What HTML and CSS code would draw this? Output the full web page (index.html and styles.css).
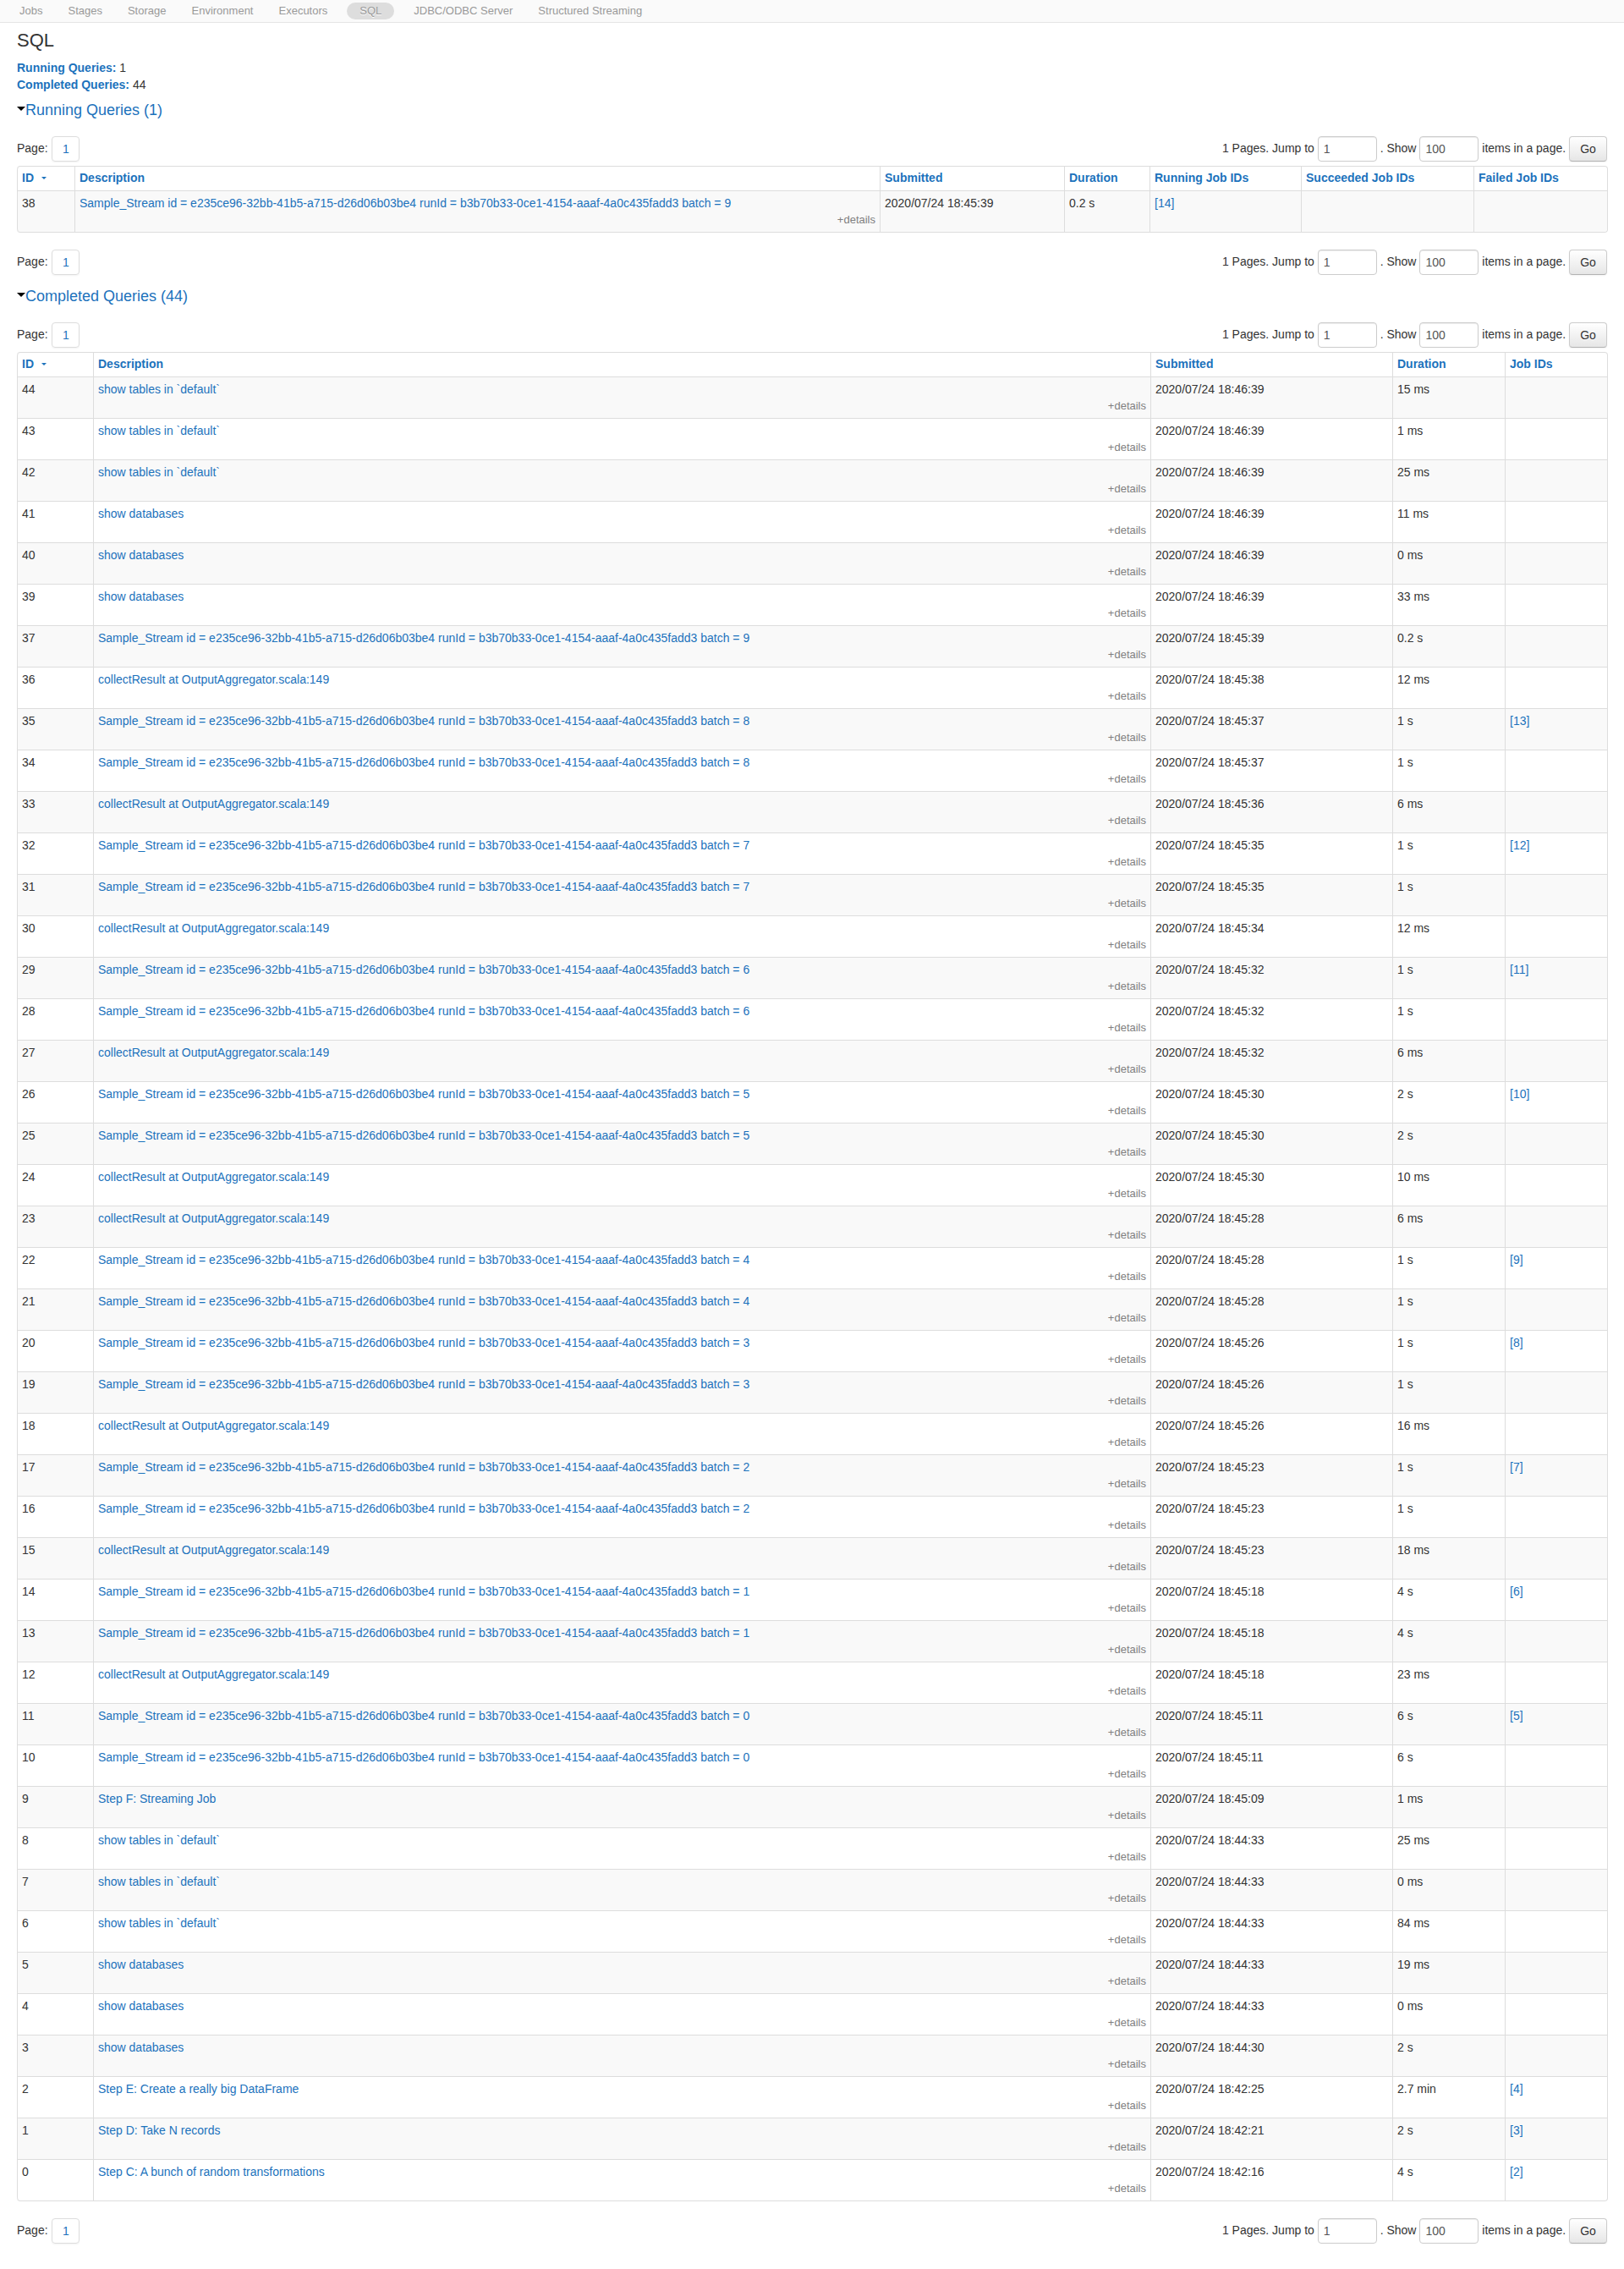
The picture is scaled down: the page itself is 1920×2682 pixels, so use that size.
FILE: index.html
```html
<!DOCTYPE html>
<html lang="en">
<head>
<meta charset="utf-8">
<title>SQL</title>
<link rel="stylesheet" href="styles.css">
</head>
<body>
<nav class="navbar">
<a>Jobs</a><a>Stages</a><a>Storage</a><a>Environment</a><a>Executors</a><a class="active">SQL</a><a>JDBC/ODBC Server</a><a>Structured Streaming</a>
</nav>
<main class="container">
<h3>SQL</h3>
<ul class="summary">
<li><a>Running Queries:</a> 1</li>
<li><a>Completed Queries:</a> 44</li>
</ul>
<h4><span class="arrow"></span><a>Running Queries (1)</a></h4>
<div class="pager"><div>Page: <a class="page-link">1</a></div><form>1 Pages. Jump to <input value="1"> . Show <input value="100"> items in a page. <button type="button">Go</button></form></div>
<table class="queries">
<colgroup><col class="r-id"><col class="r-desc"><col class="r-sub"><col class="r-dur"><col class="r-run"><col class="r-succ"><col class="r-fail"></colgroup>
<thead><tr><th>ID<i class="sort"></i><th>Description<th>Submitted<th>Duration<th>Running Job IDs<th>Succeeded Job IDs<th>Failed Job IDs</thead>
<tbody>
<tr><td>38<td><a>Sample_Stream id = e235ce96-32bb-41b5-a715-d26d06b03be4 runId = b3b70b33-0ce1-4154-aaaf-4a0c435fadd3 batch = 9</a><span>+details</span><td>2020/07/24 18:45:39<td>0.2 s<td><a>[14]</a><td><td>
</tbody>
</table>
<div class="pager below"><div>Page: <a class="page-link">1</a></div><form>1 Pages. Jump to <input value="1"> . Show <input value="100"> items in a page. <button type="button">Go</button></form></div>
<h4 class="next"><span class="arrow"></span><a>Completed Queries (44)</a></h4>
<div class="pager"><div>Page: <a class="page-link">1</a></div><form>1 Pages. Jump to <input value="1"> . Show <input value="100"> items in a page. <button type="button">Go</button></form></div>
<table class="queries">
<colgroup><col class="c-id"><col class="c-desc"><col class="c-sub"><col class="c-dur"><col class="c-jobs"></colgroup>
<thead><tr><th>ID<i class="sort"></i><th>Description<th>Submitted<th>Duration<th>Job IDs</thead>
<tbody>
<tr><td>44<td><a>show tables in `default`</a><span>+details</span><td>2020/07/24 18:46:39<td>15 ms<td>
<tr><td>43<td><a>show tables in `default`</a><span>+details</span><td>2020/07/24 18:46:39<td>1 ms<td>
<tr><td>42<td><a>show tables in `default`</a><span>+details</span><td>2020/07/24 18:46:39<td>25 ms<td>
<tr><td>41<td><a>show databases</a><span>+details</span><td>2020/07/24 18:46:39<td>11 ms<td>
<tr><td>40<td><a>show databases</a><span>+details</span><td>2020/07/24 18:46:39<td>0 ms<td>
<tr><td>39<td><a>show databases</a><span>+details</span><td>2020/07/24 18:46:39<td>33 ms<td>
<tr><td>37<td><a>Sample_Stream id = e235ce96-32bb-41b5-a715-d26d06b03be4 runId = b3b70b33-0ce1-4154-aaaf-4a0c435fadd3 batch = 9</a><span>+details</span><td>2020/07/24 18:45:39<td>0.2 s<td>
<tr><td>36<td><a>collectResult at OutputAggregator.scala:149</a><span>+details</span><td>2020/07/24 18:45:38<td>12 ms<td>
<tr><td>35<td><a>Sample_Stream id = e235ce96-32bb-41b5-a715-d26d06b03be4 runId = b3b70b33-0ce1-4154-aaaf-4a0c435fadd3 batch = 8</a><span>+details</span><td>2020/07/24 18:45:37<td>1 s<td><a>[13]</a>
<tr><td>34<td><a>Sample_Stream id = e235ce96-32bb-41b5-a715-d26d06b03be4 runId = b3b70b33-0ce1-4154-aaaf-4a0c435fadd3 batch = 8</a><span>+details</span><td>2020/07/24 18:45:37<td>1 s<td>
<tr><td>33<td><a>collectResult at OutputAggregator.scala:149</a><span>+details</span><td>2020/07/24 18:45:36<td>6 ms<td>
<tr><td>32<td><a>Sample_Stream id = e235ce96-32bb-41b5-a715-d26d06b03be4 runId = b3b70b33-0ce1-4154-aaaf-4a0c435fadd3 batch = 7</a><span>+details</span><td>2020/07/24 18:45:35<td>1 s<td><a>[12]</a>
<tr><td>31<td><a>Sample_Stream id = e235ce96-32bb-41b5-a715-d26d06b03be4 runId = b3b70b33-0ce1-4154-aaaf-4a0c435fadd3 batch = 7</a><span>+details</span><td>2020/07/24 18:45:35<td>1 s<td>
<tr><td>30<td><a>collectResult at OutputAggregator.scala:149</a><span>+details</span><td>2020/07/24 18:45:34<td>12 ms<td>
<tr><td>29<td><a>Sample_Stream id = e235ce96-32bb-41b5-a715-d26d06b03be4 runId = b3b70b33-0ce1-4154-aaaf-4a0c435fadd3 batch = 6</a><span>+details</span><td>2020/07/24 18:45:32<td>1 s<td><a>[11]</a>
<tr><td>28<td><a>Sample_Stream id = e235ce96-32bb-41b5-a715-d26d06b03be4 runId = b3b70b33-0ce1-4154-aaaf-4a0c435fadd3 batch = 6</a><span>+details</span><td>2020/07/24 18:45:32<td>1 s<td>
<tr><td>27<td><a>collectResult at OutputAggregator.scala:149</a><span>+details</span><td>2020/07/24 18:45:32<td>6 ms<td>
<tr><td>26<td><a>Sample_Stream id = e235ce96-32bb-41b5-a715-d26d06b03be4 runId = b3b70b33-0ce1-4154-aaaf-4a0c435fadd3 batch = 5</a><span>+details</span><td>2020/07/24 18:45:30<td>2 s<td><a>[10]</a>
<tr><td>25<td><a>Sample_Stream id = e235ce96-32bb-41b5-a715-d26d06b03be4 runId = b3b70b33-0ce1-4154-aaaf-4a0c435fadd3 batch = 5</a><span>+details</span><td>2020/07/24 18:45:30<td>2 s<td>
<tr><td>24<td><a>collectResult at OutputAggregator.scala:149</a><span>+details</span><td>2020/07/24 18:45:30<td>10 ms<td>
<tr><td>23<td><a>collectResult at OutputAggregator.scala:149</a><span>+details</span><td>2020/07/24 18:45:28<td>6 ms<td>
<tr><td>22<td><a>Sample_Stream id = e235ce96-32bb-41b5-a715-d26d06b03be4 runId = b3b70b33-0ce1-4154-aaaf-4a0c435fadd3 batch = 4</a><span>+details</span><td>2020/07/24 18:45:28<td>1 s<td><a>[9]</a>
<tr><td>21<td><a>Sample_Stream id = e235ce96-32bb-41b5-a715-d26d06b03be4 runId = b3b70b33-0ce1-4154-aaaf-4a0c435fadd3 batch = 4</a><span>+details</span><td>2020/07/24 18:45:28<td>1 s<td>
<tr><td>20<td><a>Sample_Stream id = e235ce96-32bb-41b5-a715-d26d06b03be4 runId = b3b70b33-0ce1-4154-aaaf-4a0c435fadd3 batch = 3</a><span>+details</span><td>2020/07/24 18:45:26<td>1 s<td><a>[8]</a>
<tr><td>19<td><a>Sample_Stream id = e235ce96-32bb-41b5-a715-d26d06b03be4 runId = b3b70b33-0ce1-4154-aaaf-4a0c435fadd3 batch = 3</a><span>+details</span><td>2020/07/24 18:45:26<td>1 s<td>
<tr><td>18<td><a>collectResult at OutputAggregator.scala:149</a><span>+details</span><td>2020/07/24 18:45:26<td>16 ms<td>
<tr><td>17<td><a>Sample_Stream id = e235ce96-32bb-41b5-a715-d26d06b03be4 runId = b3b70b33-0ce1-4154-aaaf-4a0c435fadd3 batch = 2</a><span>+details</span><td>2020/07/24 18:45:23<td>1 s<td><a>[7]</a>
<tr><td>16<td><a>Sample_Stream id = e235ce96-32bb-41b5-a715-d26d06b03be4 runId = b3b70b33-0ce1-4154-aaaf-4a0c435fadd3 batch = 2</a><span>+details</span><td>2020/07/24 18:45:23<td>1 s<td>
<tr><td>15<td><a>collectResult at OutputAggregator.scala:149</a><span>+details</span><td>2020/07/24 18:45:23<td>18 ms<td>
<tr><td>14<td><a>Sample_Stream id = e235ce96-32bb-41b5-a715-d26d06b03be4 runId = b3b70b33-0ce1-4154-aaaf-4a0c435fadd3 batch = 1</a><span>+details</span><td>2020/07/24 18:45:18<td>4 s<td><a>[6]</a>
<tr><td>13<td><a>Sample_Stream id = e235ce96-32bb-41b5-a715-d26d06b03be4 runId = b3b70b33-0ce1-4154-aaaf-4a0c435fadd3 batch = 1</a><span>+details</span><td>2020/07/24 18:45:18<td>4 s<td>
<tr><td>12<td><a>collectResult at OutputAggregator.scala:149</a><span>+details</span><td>2020/07/24 18:45:18<td>23 ms<td>
<tr><td>11<td><a>Sample_Stream id = e235ce96-32bb-41b5-a715-d26d06b03be4 runId = b3b70b33-0ce1-4154-aaaf-4a0c435fadd3 batch = 0</a><span>+details</span><td>2020/07/24 18:45:11<td>6 s<td><a>[5]</a>
<tr><td>10<td><a>Sample_Stream id = e235ce96-32bb-41b5-a715-d26d06b03be4 runId = b3b70b33-0ce1-4154-aaaf-4a0c435fadd3 batch = 0</a><span>+details</span><td>2020/07/24 18:45:11<td>6 s<td>
<tr><td>9<td><a>Step F: Streaming Job</a><span>+details</span><td>2020/07/24 18:45:09<td>1 ms<td>
<tr><td>8<td><a>show tables in `default`</a><span>+details</span><td>2020/07/24 18:44:33<td>25 ms<td>
<tr><td>7<td><a>show tables in `default`</a><span>+details</span><td>2020/07/24 18:44:33<td>0 ms<td>
<tr><td>6<td><a>show tables in `default`</a><span>+details</span><td>2020/07/24 18:44:33<td>84 ms<td>
<tr><td>5<td><a>show databases</a><span>+details</span><td>2020/07/24 18:44:33<td>19 ms<td>
<tr><td>4<td><a>show databases</a><span>+details</span><td>2020/07/24 18:44:33<td>0 ms<td>
<tr><td>3<td><a>show databases</a><span>+details</span><td>2020/07/24 18:44:30<td>2 s<td>
<tr><td>2<td><a>Step E: Create a really big DataFrame</a><span>+details</span><td>2020/07/24 18:42:25<td>2.7 min<td><a>[4]</a>
<tr><td>1<td><a>Step D: Take N records</a><span>+details</span><td>2020/07/24 18:42:21<td>2 s<td><a>[3]</a>
<tr><td>0<td><a>Step C: A bunch of random transformations</a><span>+details</span><td>2020/07/24 18:42:16<td>4 s<td><a>[2]</a>
</tbody>
</table>
<div class="pager below"><div>Page: <a class="page-link">1</a></div><form>1 Pages. Jump to <input value="1"> . Show <input value="100"> items in a page. <button type="button">Go</button></form></div>
</main>
</body>
</html>
```
FILE: styles.css
```css
* { box-sizing: border-box; }
body { margin: 0; background: #fff; color: #333; font: 14px/20px "Liberation Sans", Arial, sans-serif; }
a { color: #1c72bc; text-decoration: none; }

.navbar { display: flex; height: 27px; padding: 3px 8px; background: #fafafa; border-bottom: 1px solid #e5e5e5; font-size: 13px; }
.navbar a { height: 20px; padding: 0 15px; line-height: 20px; color: #999; }
.navbar .active { margin: 0 8px; background: #ddd; border-radius: 10px; text-shadow: 0 1px 0 #fff; }

.container { padding: 0 20px; height: 2655px; }
h3 { margin: 0; padding-top: 11px; font-size: 22px; line-height: 20px; font-weight: 400; }
.summary { list-style: none; margin: 12px 0 0; padding: 0; }
.summary a { font-weight: 700; }
h4 { display: flex; align-items: center; margin: 10px 0 0; font-size: 18px; line-height: 20px; font-weight: 400; }
h4.next { margin-top: 15px; }
.arrow { border: 5px solid transparent; border-top-color: #000; border-bottom: 0; margin-bottom: 3px; }

.pager { display: flex; justify-content: space-between; height: 30px; margin: 21px 0 5px; line-height: 28px; }
.pager.below { margin: 20px 0 0; }
.pager form { white-space: pre; }
.page-link { display: inline-block; width: 33px; height: 30px; line-height: 28px; margin-left: 1px; border: 1px solid #ddd; border-radius: 4px; text-align: center; box-shadow: 0 1px 2px rgba(0,0,0,.05); }
input { width: 70px; height: 30px; padding: 4px 6px; border: 1px solid #ccc; border-radius: 4px; color: #555; font: 14px/20px "Liberation Sans", Arial, sans-serif; box-shadow: inset 0 1px 1px rgba(0,0,0,.075); }
button { width: 45px; height: 30px; padding: 0; border: 1px solid #ccc; border-bottom-color: #b3b3b3; border-radius: 4px; background: linear-gradient(#fff, #e6e6e6); color: #333; font: 14px/20px "Liberation Sans", Arial, sans-serif; text-shadow: 0 1px 1px rgba(255,255,255,.75); box-shadow: inset 0 1px 0 rgba(255,255,255,.2), 0 1px 2px rgba(0,0,0,.05); }
input, button, .page-link { vertical-align: top; }

.queries { width: 1880px; table-layout: fixed; border: 1px solid #ddd; border-left: 0; border-radius: 4px; border-collapse: separate; border-spacing: 0; }
.queries th, .queries td { padding: 4px 5px; border-left: 1px solid #ddd; text-align: left; vertical-align: top; }
.queries th { padding: 3px 5px 5px; color: #1c72bc; }
.queries td { height: 49px; border-top: 1px solid #ddd; }
.queries tbody tr:nth-child(odd) td { background: #f9f9f9; }
.queries th:first-child { border-top-left-radius: 4px; }
.queries tbody tr:last-child td:first-child { border-bottom-left-radius: 4px; }
.queries tbody tr:last-child td:last-child { border-bottom-right-radius: 4px; }
.queries span { display: block; text-align: right; font-size: 13px; color: #808080; }
.sort { display: inline-block; margin-left: 9px; border: 3px solid transparent; border-top-color: #1c72bc; border-bottom: 0; vertical-align: 3px; }

.r-id { width: 68px; } .r-desc { width: 952px; } .r-sub { width: 218px; } .r-dur { width: 101px; }
.r-run { width: 179px; } .r-succ { width: 204px; } .r-fail { width: 158px; }
.c-id { width: 90px; } .c-desc { width: 1250px; } .c-sub { width: 286px; } .c-dur { width: 133px; } .c-jobs { width: 121px; }
```
